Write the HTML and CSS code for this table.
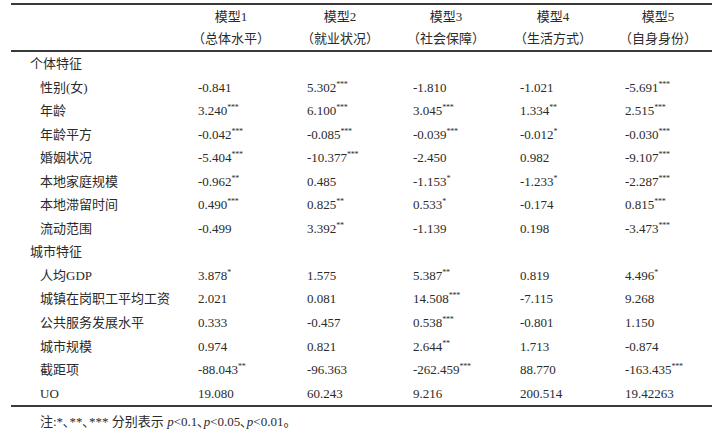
FILE: index.html
```html
<!DOCTYPE html>
<html lang="zh">
<head>
<meta charset="utf-8">
<link rel="stylesheet" href="styles.css">
</head>
<body>
<div class="wrap">
  <div class="table">
    <div class="head">
      <div class="hcell"></div>
      <div class="hcell"><div class="hbox"><div class="h1">模型1</div><div class="h2">（总体水平）</div></div></div>
      <div class="hcell"><div class="hbox"><div class="h1">模型2</div><div class="h2">（就业状况）</div></div></div>
      <div class="hcell"><div class="hbox"><div class="h1">模型3</div><div class="h2">（社会保障）</div></div></div>
      <div class="hcell"><div class="hbox"><div class="h1">模型4</div><div class="h2">（生活方式）</div></div></div>
      <div class="hcell"><div class="hbox"><div class="h1">模型5</div><div class="h2">（自身身份）</div></div></div>
    </div>
    <div class="body">
      <div class="row"><div class="grp">个体特征</div><div></div><div></div><div></div><div></div><div></div></div>
      <div class="row"><div class="lbl">性别(女)</div><div>-0.841</div><div>5.302<span class="s">***</span></div><div>-1.810</div><div>-1.021</div><div>-5.691<span class="s">***</span></div></div>
      <div class="row"><div class="lbl">年龄</div><div>3.240<span class="s">***</span></div><div>6.100<span class="s">***</span></div><div>3.045<span class="s">***</span></div><div>1.334<span class="s">**</span></div><div>2.515<span class="s">***</span></div></div>
      <div class="row"><div class="lbl">年龄平方</div><div>-0.042<span class="s">***</span></div><div>-0.085<span class="s">***</span></div><div>-0.039<span class="s">***</span></div><div>-0.012<span class="s">*</span></div><div>-0.030<span class="s">***</span></div></div>
      <div class="row"><div class="lbl">婚姻状况</div><div>-5.404<span class="s">***</span></div><div>-10.377<span class="s">***</span></div><div>-2.450</div><div>0.982</div><div>-9.107<span class="s">***</span></div></div>
      <div class="row"><div class="lbl">本地家庭规模</div><div>-0.962<span class="s">**</span></div><div>0.485</div><div>-1.153<span class="s">*</span></div><div>-1.233<span class="s">*</span></div><div>-2.287<span class="s">***</span></div></div>
      <div class="row"><div class="lbl">本地滞留时间</div><div>0.490<span class="s">***</span></div><div>0.825<span class="s">**</span></div><div>0.533<span class="s">*</span></div><div>-0.174</div><div>0.815<span class="s">***</span></div></div>
      <div class="row"><div class="lbl">流动范围</div><div>-0.499</div><div>3.392<span class="s">**</span></div><div>-1.139</div><div>0.198</div><div>-3.473<span class="s">***</span></div></div>
      <div class="row"><div class="grp">城市特征</div><div></div><div></div><div></div><div></div><div></div></div>
      <div class="row"><div class="lbl">人均GDP</div><div>3.878<span class="s">*</span></div><div>1.575</div><div>5.387<span class="s">**</span></div><div>0.819</div><div>4.496<span class="s">*</span></div></div>
      <div class="row"><div class="lbl">城镇在岗职工平均工资</div><div>2.021</div><div>0.081</div><div>14.508<span class="s">***</span></div><div>-7.115</div><div>9.268</div></div>
      <div class="row"><div class="lbl">公共服务发展水平</div><div>0.333</div><div>-0.457</div><div>0.538<span class="s">***</span></div><div>-0.801</div><div>1.150</div></div>
      <div class="row"><div class="lbl">城市规模</div><div>0.974</div><div>0.821</div><div>2.644<span class="s">**</span></div><div>1.713</div><div>-0.874</div></div>
      <div class="row"><div class="lbl">截距项</div><div>-88.043<span class="s">**</span></div><div>-96.363</div><div>-262.459<span class="s">***</span></div><div>88.770</div><div>-163.435<span class="s">***</span></div></div>
      <div class="row"><div class="lbl">UO</div><div>19.080</div><div>60.243</div><div>9.216</div><div>200.514</div><div>19.42263</div></div>
    </div>
  </div>
  <p class="note">注:*､**､*** 分别表示 <i>p</i>&lt;0.1､<i>p</i>&lt;0.05､<i>p</i>&lt;0.01。</p>
</div>
</body>
</html>
```

FILE: styles.css
```css
html, body {
  margin: 0;
  padding: 0;
  background: #fff;
}
body {
  font-family: "Liberation Serif", "Noto Sans CJK SC", serif;
  font-size: 13px;
  color: #2a2a2a;
}
.wrap {
  padding: 3px 8px 0 11px;
  width: 701px;
}
.table {
  border-top: 2px solid #3a3a3a;
  border-bottom: 2px solid #3a3a3a;
}
.head, .row {
  display: grid;
  grid-template-columns: 187px 109px 106px 107px 105px 87px;
}
.head {
  border-bottom: 2px solid #3a3a3a;
  height: 45px;
}
.hbox {
  display: inline-block;
  text-align: center;
  margin-left: -6px;
  white-space: nowrap;
}
.h1 {
  height: 23px;
  line-height: 23px;
}
.h2 {
  height: 22px;
  line-height: 22px;
}
.row {
  height: 23.55px;
  line-height: 23.55px;
  white-space: nowrap;
}
.grp {
  padding-left: 19px;
}
.lbl {
  padding-left: 29px;
}
.s {
  font-size: 8px;
  vertical-align: 5px;
  line-height: 0;
  letter-spacing: -0.3px;
}
.note {
  margin: 5px 0 0 29px;
  line-height: 20px;
}
.note i {
  font-style: italic;
}
```
